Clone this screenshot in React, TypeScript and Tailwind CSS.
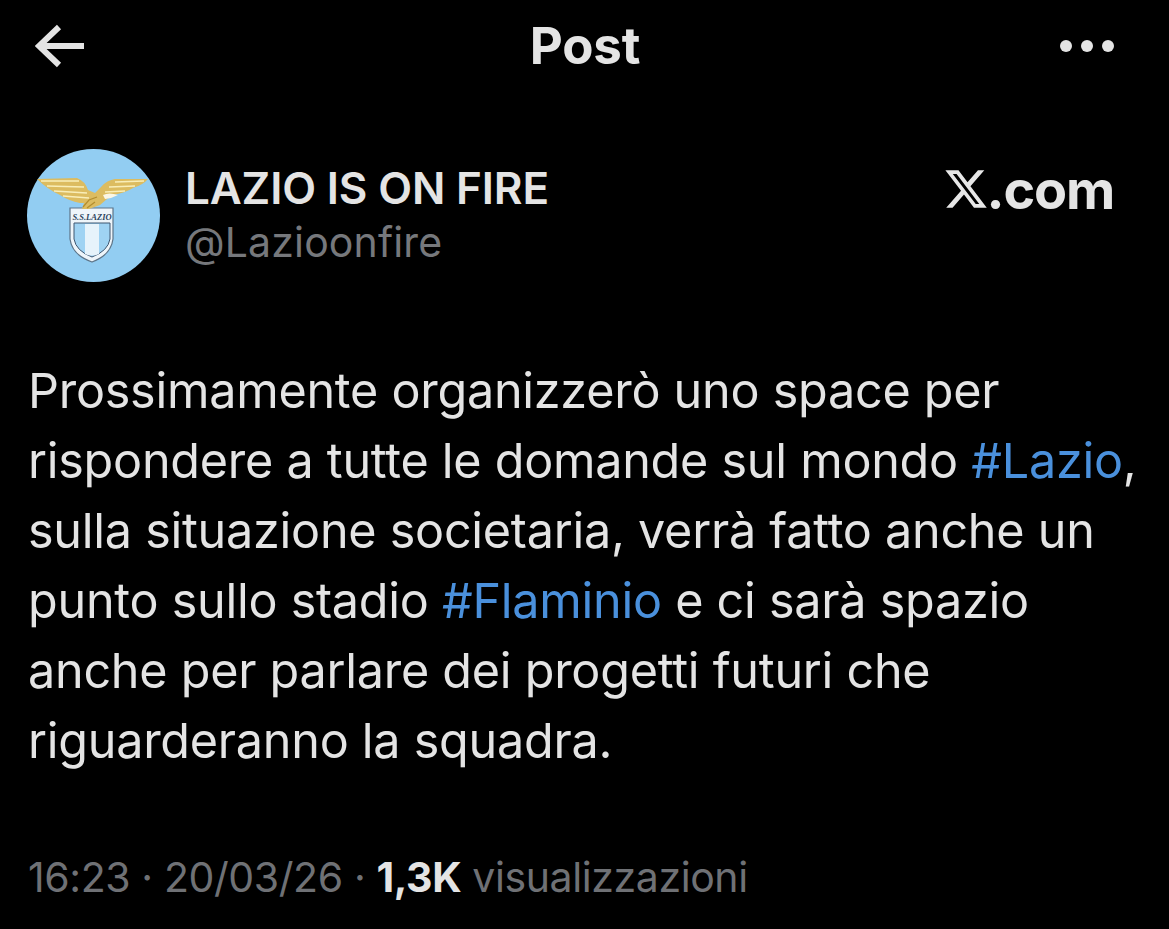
const Avatar = () => (
  <svg viewBox="0 0 133 133" className="w-[133px] h-[133px] shrink-0">
    <circle cx="66.5" cy="66.5" r="66.5" fill="#92cdf2" />
    {/* shield */}
    <path d="M43 59 H86 V90 Q84 106 65 113 Q45 106 43 90Z" fill="#eef5fa" stroke="#5d7488" strokeWidth="1.2" />
    <path d="M47 74 H83 V90 Q81 102 65 108 Q49 102 47 90Z" fill="#9fd3f3" stroke="#3e5670" strokeWidth="1" />
    <path d="M58 75 H72 V105 Q65 108 58 105Z" fill="#e6f3fb" />
    <text x="65" y="71" textAnchor="middle" fontSize="8.5" fontStyle="italic" fontWeight="700" fontFamily="'Liberation Serif', serif" fill="#2d4560">S.S.LAZIO</text>
    {/* wings and eagle body */}
    <path d="M10 30 L50 29 Q58 32 61 41 L68 44 L74 38 Q80 31 88 30 L121 30 Q116 36 106 39 Q98 44 86 46 L80 50 L73 56 L62 60 L55 60 L57 54 L53 54 Q42 52 33 46 Q20 40 10 30Z" fill="#dcbc60" />
    <path d="M14 32 L52 32 M20 37 L57 38 M27 42 L60 44 M36 47 L62 49" stroke="#f9eeb8" strokeWidth="1.3" fill="none" />
    <path d="M117 32 L88 33 M108 37 L82 38 M98 42 L78 43" stroke="#f9eeb8" strokeWidth="1.3" fill="none" />
    <path d="M76 46 Q82 43 91 46 L84 49 L78 50Z" fill="#fbf6e4" />
    <path d="M56 58 L62 51 L70 48 M60 59 L68 53" stroke="#b28d2e" strokeWidth="1.2" fill="none" />
  </svg>
);

const XLogo = () => (
  <svg viewBox="0 0 24 24" className="w-[46px] h-[46px] -mr-[2px] -ml-[2px]" fill="#e7e7e7">
    <path d="M18.244 2.25h3.308l-7.227 8.26 8.502 11.24H16.17l-5.214-6.817L4.99 21.75H1.68l7.73-8.835L1.254 2.25H8.08l4.713 6.231zm-1.161 17.52h1.833L7.084 4.126H5.117z" />
  </svg>
);

export default function App() {
  return (
    <div className="w-[1169px] h-[929px] overflow-hidden bg-black text-[#e4e4e4] font-['Inter','Liberation_Sans',sans-serif]">
      <header className="h-[92px] pl-[35px] pr-[55px] flex items-center justify-between">
        <svg viewBox="0 0 50 46" className="w-[50px] h-[46px]" fill="none" stroke="#e4e4e4" strokeWidth="6">
          <path d="M49 23 H6 M24 4 L4 23 L24 42" />
        </svg>
        <span className="text-[51px] font-bold tracking-[-0.2px] ml-[25px]">Post</span>
        <div className="flex gap-[9px]">
          <span className="w-[12px] h-[12px] rounded-full bg-[#e4e4e4]" />
          <span className="w-[12px] h-[12px] rounded-full bg-[#e4e4e4]" />
          <span className="w-[12px] h-[12px] rounded-full bg-[#e4e4e4]" />
        </div>
      </header>

      <section className="mt-[57px] pl-[27px] pr-[55px] flex items-center">
        <Avatar />
        <div className="ml-[25px] flex-1 -mt-[1px]">
          <div className="text-[44px] leading-[54px] font-semibold tracking-[-0.15px]">LAZIO IS ON FIRE</div>
          <div className="text-[41px] leading-[54px] tracking-[0.15px] text-[#76787c]">@Lazioonfire</div>
        </div>
        <div className="flex items-center -mt-[53px] text-[54px] font-bold tracking-[-1.2px]">
          <XLogo />
          <span>.com</span>
        </div>
      </section>

      <p className="mt-[74px] pl-[28px] text-[48.5px] leading-[70px] tracking-[-0.25px] whitespace-pre-line">
        Prossimamente organizzerò uno space per{"\n"}
        rispondere a tutte le domande sul mondo <span className="text-[#4a90dc]">#Lazio</span>,{"\n"}
        sulla situazione societaria, verrà fatto anche un{"\n"}
        punto sullo stadio <span className="text-[#4a90dc]">#Flaminio</span> e ci sarà spazio{"\n"}
        anche per parlare dei progetti futuri che{"\n"}
        riguarderanno la squadra.
      </p>

      <footer className="mt-[78px] pl-[28px] text-[41px] leading-[46px] tracking-[-0.4px] text-[#6f7175]">
        16:23 · 20/03/26 · <span className="font-bold text-[#e4e4e4]">1,3K</span> visualizzazioni
      </footer>
    </div>
  );
}
